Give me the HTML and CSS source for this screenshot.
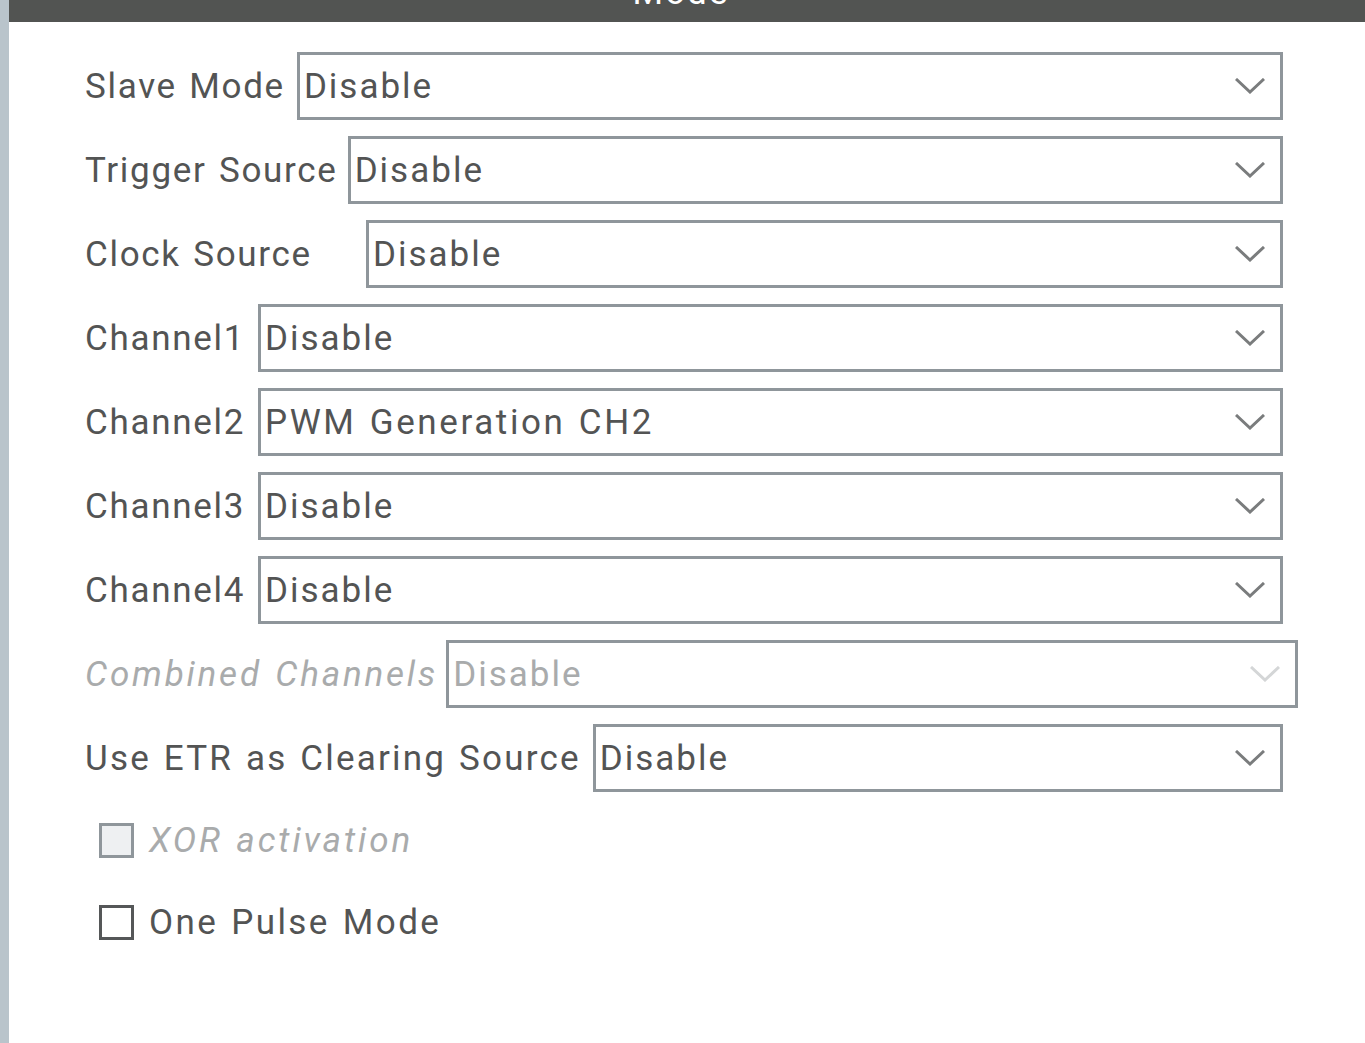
FILE: index.html
```html
<!DOCTYPE html>
<html>
<head>
<meta charset="utf-8">
<link rel="stylesheet" href="styles.css">
</head>
<body>
<div class="app">
  <div class="sidebar"></div>
  <div class="panel">
    <div class="header"><div class="header-title">Mode</div></div>
    <div class="form">
      <div class="row">
        <span class="label">Slave Mode</span>
        <div class="select"><span class="value">Disable</span><svg class="chev" viewBox="0 0 30 16"><polyline points="1,1 15,14 29,1"/></svg></div>
      </div>
      <div class="row">
        <span class="label label-tight">Trigger Source</span>
        <div class="select"><span class="value">Disable</span><svg class="chev" viewBox="0 0 30 16"><polyline points="1,1 15,14 29,1"/></svg></div>
      </div>
      <div class="row">
        <span class="label label-clock">Clock Source</span>
        <div class="select"><span class="value">Disable</span><svg class="chev" viewBox="0 0 30 16"><polyline points="1,1 15,14 29,1"/></svg></div>
      </div>
      <div class="row">
        <span class="label label-ch">Channel1</span>
        <div class="select"><span class="value">Disable</span><svg class="chev" viewBox="0 0 30 16"><polyline points="1,1 15,14 29,1"/></svg></div>
      </div>
      <div class="row">
        <span class="label label-ch">Channel2</span>
        <div class="select"><span class="value value-wide">PWM Generation CH2</span><svg class="chev" viewBox="0 0 30 16"><polyline points="1,1 15,14 29,1"/></svg></div>
      </div>
      <div class="row">
        <span class="label label-ch">Channel3</span>
        <div class="select"><span class="value">Disable</span><svg class="chev" viewBox="0 0 30 16"><polyline points="1,1 15,14 29,1"/></svg></div>
      </div>
      <div class="row">
        <span class="label label-ch">Channel4</span>
        <div class="select"><span class="value">Disable</span><svg class="chev" viewBox="0 0 30 16"><polyline points="1,1 15,14 29,1"/></svg></div>
      </div>
      <div class="row row-disabled">
        <span class="label">Combined Channels</span>
        <div class="select select-disabled"><span class="value">Disable</span><svg class="chev" viewBox="0 0 30 16"><polyline points="1,1 15,14 29,1"/></svg></div>
      </div>
      <div class="row">
        <span class="label label-etr">Use ETR as Clearing Source</span>
        <div class="select"><span class="value">Disable</span><svg class="chev" viewBox="0 0 30 16"><polyline points="1,1 15,14 29,1"/></svg></div>
      </div>
      <div class="check-row check-disabled">
        <span class="box"></span><span class="check-label">XOR activation</span>
      </div>
      <div class="check-row">
        <span class="box"></span><span class="check-label">One Pulse Mode</span>
      </div>
    </div>
  </div>
</div>
</body>
</html>
```

FILE: styles.css
```css
html, body {
  margin: 0;
  padding: 0;
  background: #ffffff;
}
body {
  font-family: Roboto, "Liberation Sans", sans-serif;
  color: #535454;
}
.app {
  display: flex;
  height: 1043px;
  overflow: hidden;
}
.sidebar {
  width: 9px;
  flex: none;
  background: #b9c4cb;
}
.panel {
  flex: 1;
  display: flex;
  flex-direction: column;
}
.header {
  height: 22px;
  background: #525452;
  overflow: hidden;
  text-align: center;
  padding-right: 12px;
}
.header-title {
  display: block;
  color: #ffffff;
  font-size: 35px;
  line-height: 35px;
  letter-spacing: 2px;
  margin-top: -25px;
}
.form {
  padding: 30px 82px 0 76px;
  display: flex;
  flex-direction: column;
  gap: 16px;
}
.row {
  display: flex;
  align-items: center;
  height: 68px;
}
.label {
  font-size: 35px;
  letter-spacing: 1.7px;
  word-spacing: 2px;
  white-space: nowrap;
  margin-right: 12px;
}
.label-tight {
  margin-right: 10px;
}
.label-clock {
  width: 269px;
}
.label-ch {
  width: 161px;
}
.label-etr {
  letter-spacing: 2.2px;
  margin-right: 12px;
}
.select {
  flex: 1;
  height: 68px;
  box-sizing: border-box;
  border: 3px solid #8f969b;
  display: flex;
  align-items: center;
  padding: 0 15px 0 4px;
}
.value {
  flex: 1;
  font-size: 35px;
  letter-spacing: 2px;
  word-spacing: 2px;
  white-space: nowrap;
}
.value-wide {
  letter-spacing: 2.6px;
}
.chev {
  width: 30px;
  height: 16px;
  fill: none;
  stroke: #7a7c7d;
  stroke-width: 3;
}
.row-disabled .label {
  font-style: italic;
  color: #a9abac;
  letter-spacing: 2.8px;
  margin-right: 8px;
}
.select-disabled {
  margin-right: -15px;
}
.select-disabled .value {
  color: #a9abac;
}
.select-disabled .chev {
  stroke: #d4d6d7;
}
.check-row {
  display: flex;
  align-items: center;
  gap: 15px;
  padding-left: 14px;
  height: 36px;
}
.check-row + .check-row {
  margin-top: 30px;
}
.box {
  width: 35px;
  height: 35px;
  flex: none;
  box-sizing: border-box;
  border: 3px solid #555758;
  background: #ffffff;
}
.check-label {
  font-size: 35px;
  letter-spacing: 2.4px;
  word-spacing: 2px;
}
.check-disabled {
  margin-top: 14px;
}
.check-disabled .box {
  border-color: #8f969b;
  background: #eef0f2;
}
.check-disabled .check-label {
  font-style: italic;
  color: #a9abac;
  letter-spacing: 2.9px;
}
```
